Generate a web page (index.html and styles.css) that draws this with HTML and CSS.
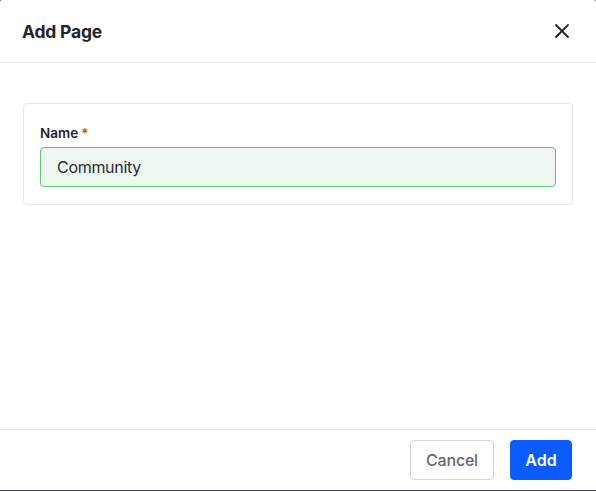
FILE: index.html
```html
<!DOCTYPE html>
<html>
<head>
<meta charset="utf-8">
<link rel="stylesheet" href="styles.css">
</head>
<body>
<div class="modal">
  <div class="modal-header">
    <h2 class="modal-title">Add Page</h2>
    <button class="close-btn" aria-label="Close">
      <svg width="16" height="16" viewBox="0 0 16 16"><path d="M2 2 L14 14 M14 2 L2 14" stroke="#24242e" stroke-width="1.8" stroke-linecap="round" fill="none"/></svg>
    </button>
  </div>
  <div class="modal-body">
    <div class="card">
      <label class="field-label">Name<span class="req">*</span></label>
      <div class="input">Community</div>
    </div>
  </div>
  <div class="modal-footer">
    <button class="btn btn-secondary">Cancel</button>
    <button class="btn btn-primary">Add</button>
  </div>
</div>
</body>
</html>
```
FILE: styles.css
```css
* { box-sizing: border-box; }
html, body { margin: 0; padding: 0; }
body {
  background: #4b4b57;
  font-family: Inter, "Noto Sans", sans-serif;
  width: 596px;
  height: 491px;
  overflow: hidden;
}
.modal {
  background: #fff;
  width: 596px;
  height: 490px;
  display: flex;
  flex-direction: column;
  border-radius: 2px 2px 0 0;
}
.modal-header {
  height: 63px;
  border-bottom: 1px solid #e6e6ec;
  display: flex;
  align-items: center;
  justify-content: space-between;
  padding: 0 26px 0 22px;
}
.modal-title {
  margin: 0;
  font-size: 17.5px;
  font-weight: 700;
  color: #23232f;
  letter-spacing: -0.2px;
}
.close-btn {
  background: none;
  border: 0;
  padding: 0;
  width: 16px;
  height: 16px;
  display: flex;
}
.modal-body {
  flex: 1;
  padding: 40px 23px 0 23px;
}
.card {
  border: 1px solid #e6e6ec;
  border-radius: 4px;
  padding: 16px 16px 17px 16px;
  display: flex;
  flex-direction: column;
}
.field-label {
  font-size: 13.5px;
  font-weight: 600;
  color: #23232f;
  line-height: 21px;
  padding-top: 3px;
  margin-bottom: 3px;
}
.req {
  color: #c4501a;
  margin-left: 3px;
}
.input {
  height: 40px;
  border: 1px solid #5bc878;
  background: #edf7ef;
  border-radius: 4px;
  padding: 0 16px;
  display: flex;
  align-items: center;
  font-size: 16px;
  letter-spacing: -0.3px;
  color: #2a2a35;
}
.modal-footer {
  border-top: 1px solid #e6e6ec;
  padding: 10px 24px 10px 24px;
  display: flex;
  justify-content: flex-end;
  gap: 16px;
}
.btn {
  height: 40px;
  border-radius: 4px;
  font-family: Inter, "Noto Sans", sans-serif;
  font-size: 16px;
  padding: 0;
}
.btn-secondary {
  background: #fff;
  border: 1px solid #d3d3dc;
  color: #676775;
  font-weight: 500;
  width: 84px;
  letter-spacing: -0.2px;
}
.btn-primary {
  background: #0b5cff;
  border: 1px solid #0b5cff;
  color: #fff;
  font-weight: 600;
  width: 62px;
}
```
